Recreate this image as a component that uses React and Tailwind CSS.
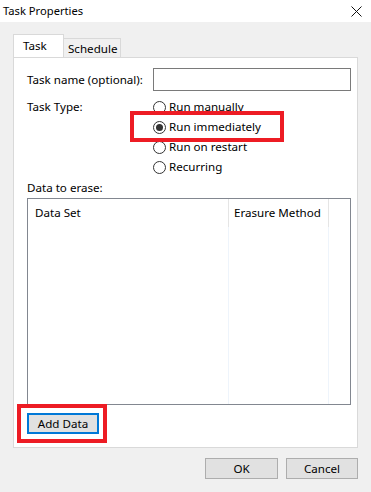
const font = { fontFamily: '"Noto Sans", "Liberation Sans", sans-serif' }

const Radio = ({ checked, label }) => (
  <div className="flex items-center h-[20px]">
    <span className="w-[13px] h-[13px] rounded-full border border-[#333] bg-white flex items-center justify-center">
      {checked && <span className="w-[7px] h-[7px] rounded-full bg-[#333]" />}
    </span>
    <span className="ml-[3px] text-[11.6px] text-black leading-none">{label}</span>
  </div>
)

export default function App() {
  return (
    <div className="w-[371px] h-[492px] bg-[#f0f0f0] text-[11.6px] text-black flex flex-col overflow-hidden" style={font}>
      {/* 타이틀바 */}
      <div className="h-[22px] bg-white flex items-center justify-between pl-[3px] pr-[9px]">
        <span className="text-[11.2px]">Task Properties</span>
        <svg width="11" height="11" viewBox="0 0 11 11" className="mt-[1px]">
          <path d="M0.5 0.5L10.5 10.5M10.5 0.5L0.5 10.5" stroke="#111" strokeWidth="1" />
        </svg>
      </div>

      <div className="px-[13px] pt-[13px] flex flex-col">
        {/* 탭 */}
        <div className="flex items-end h-[22px]">
          <div className="w-[51px] h-[23px] bg-white border border-b-0 border-[#d9d9d9] pl-[9px] pt-[2px] relative z-10">
            Task
          </div>
          <div className="w-[57px] h-[19px] border border-b-0 border-l-0 border-[#d9d9d9] pl-[4px] pt-[1px]">
            Schedule
          </div>
        </div>

        {/* 패널 */}
        <div className="h-[391px] bg-white border border-[#d9d9d9] flex flex-col pl-[13px] pr-[6px] pt-[10px]">
          <div className="flex items-center h-[23px]">
            <span className="w-[126px]">Task name (optional):</span>
            <div className="w-[198px] h-[23px] border border-[#7a7a7a] bg-white" />
          </div>

          <div className="flex mt-[5px]">
            <span className="w-[126px] h-[21px] flex items-center">Task Type:</span>
            <div className="flex flex-col relative pt-[1px]">
              <Radio label="Run manually" />
              <Radio checked label="Run immediately" />
              <Radio label="Run on restart" />
              <Radio label="Recurring" />
              <div className="absolute left-[-23px] top-[15px] w-[154px] h-[31px] border-[4px] border-[#ed1c24]" />
            </div>
          </div>

          <div className="mt-[2px] h-[18px] flex items-center">Data to erase:</div>

          <div className="mt-[1px] w-[324px] h-[207px] border border-[#828790] bg-white flex">
            <div className="w-[201px] flex flex-col border-r border-[#eef4fb]">
              <div className="h-[28px] border-r border-[#e5e5e5] -mr-[1px] pl-[7px] flex items-center">Data Set</div>
            </div>
            <div className="w-[100px] flex flex-col border-r border-[#eef4fb]">
              <div className="h-[28px] border-r border-[#e5e5e5] -mr-[1px] pl-[5px] flex items-center">Erasure Method</div>
            </div>
          </div>

          <div className="mt-[8px] relative w-[72px]">
            <button className="w-[72px] h-[21px] bg-[#e1e1e1] border-2 border-[#0078d7] flex items-center justify-center">
              Add Data
            </button>
            <div className="absolute left-[-10px] top-[-9px] w-[90px] h-[39px] border-[4px] border-[#ed1c24]" />
          </div>
        </div>

        {/* 하단 버튼 */}
        <div className="flex justify-end gap-[8px] mt-[10px]">
          <button className="w-[73px] h-[21px] bg-[#e1e1e1] border border-[#adadad] flex items-center justify-center">OK</button>
          <button className="w-[72px] h-[21px] bg-[#e1e1e1] border border-[#adadad] flex items-center justify-center">Cancel</button>
        </div>
      </div>
    </div>
  )
}
